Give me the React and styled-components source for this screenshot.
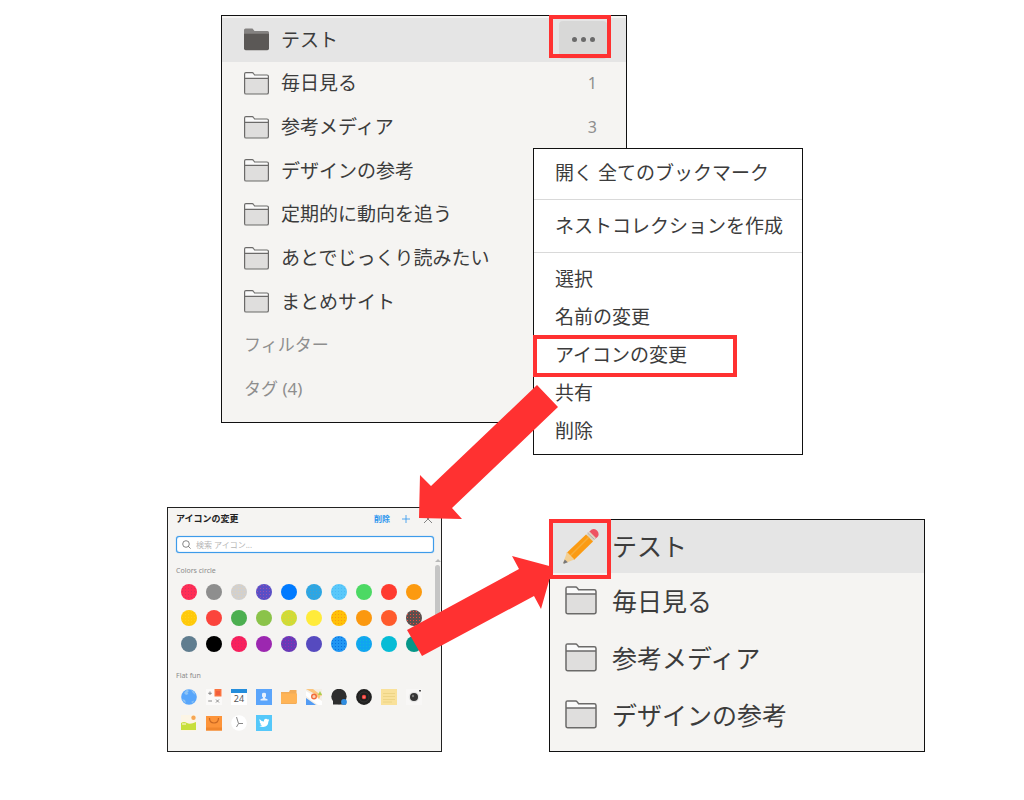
import React from "react";
import styled, { createGlobalStyle, css } from "styled-components";

const colors = {
  red: "#ff3131",
  panel: "#f5f4f2",
  active: "#e5e5e5",
  hover: "#d8d8d7",
  text: "#3c3c3c",
  sub: "#8e8e8e",
  line: "#d9d9d9",
  blue: "#2b94ee",
};

const collections = [
  { title: "毎日見る", count: 1 },
  { title: "参考メディア", count: 3 },
  { title: "デザインの参考" },
  { title: "定期的に動向を追う" },
  { title: "あとでじっくり読みたい" },
  { title: "まとめサイト" },
];

const menuSections = [
  ["開く 全てのブックマーク"],
  ["ネストコレクションを作成"],
  ["選択", "名前の変更", "アイコンの変更", "共有", "削除"],
];

const swatches = [
  ["#ff2d55", "#d9305f"],
  ["#8e8e8e"],
  ["#d1d0cf", "#e2d0b8"],
  ["#5a4fc6", "#9a54ae"],
  ["#007aff"],
  ["#2ca6e4", "#4fa0c4"],
  ["#5ac8fa", "#4bbaf5"],
  ["#4cd964"],
  ["#ff3b30"],
  ["#fc9a0f"],
  ["#ffc90a", "#ffd21c"],
  ["#fb443c"],
  ["#4caf50"],
  ["#8bc34a"],
  ["#cddc39", "#ecd02a"],
  ["#ffeb3b"],
  ["#ffc107", "#fb9a12"],
  ["#fb980f"],
  ["#ff5a2c"],
  ["#5c4f4d", "#f0483e"],
  ["#607d8f"],
  ["#000000"],
  ["#f8205c", "#de2468"],
  ["#9c27b0"],
  ["#673ab7", "#9c27b0"],
  ["#564abf"],
  ["#2196f3", "#0a70e0"],
  ["#10a5f0", "#10b9da"],
  ["#06bcd6"],
  ["#069688"],
];

function FolderIcon({ filled, large }) {
  return (
    <Svg viewBox="0 0 25 23" $w={large ? 32 : 25} $h={large ? 29 : 23} aria-hidden="true">
      {filled ? (
        <>
          <path d="M0 2Q0 .5 1.500 .5H8.500L10.500 3H23.500Q25 3 25 4.500V7H0Z" fill="#848281" />
          <path d="M0 5.800H25V20.500Q25 22.300 23.300 22.300H1.700Q0 22.300 0 20.500Z" fill="#5b5856" />
        </>
      ) : (
        <>
          <path d="M.6 2Q.6 .7 1.900 .7H8.200Q9 .7 9.500 1.500L10.600 3H23Q24.400 3 24.400 4.300V20.400Q24.400 22 22.900 22H2.100Q.6 22 .6 20.400Z" fill="#fafafa" />
          <path d="M.6 6.300H24.400V20.400Q24.400 22 22.900 22H2.100Q.6 22 .6 20.400Z" fill="#dfdedd" />
          <path
            d="M.6 2Q.6 .7 1.900 .7H8.200Q9 .7 9.500 1.500L10.600 3H23Q24.400 3 24.400 4.300V20.400Q24.400 22 22.900 22H2.100Q.6 22 .6 20.400ZM.6 6.300H24.400"
            fill="none"
            stroke="#6b6a69"
            strokeWidth="1.200"
          />
        </>
      )}
    </Svg>
  );
}

function PencilIcon() {
  return (
    <Svg viewBox="0 0 36 36" $w={36} $h={36} aria-hidden="true">
      <path d="M27 3Q30-.5 34 2.500Q37 6 34.500 9L32 11L25.500 4.500Z" fill="#ee5263" />
      <path d="M26.500 3.500L33 10L29.500 13.500L23 7Z" fill="#dfd3c0" />
      <path d="M24.500 5L31.500 11.500" stroke="#a9b0b4" strokeWidth="1" />
      <path d="M23 6.500L30 13.500L11 32L3.500 25Z" fill="#fb9b13" />
      <path d="M26 9L7 28" stroke="#f5ae3c" strokeWidth="1.500" />
      <path d="M4 24L11.500 31.500L1 35.500Q0 35.500 .5 34Z" fill="#f3cf92" />
      <path d="M1.800 31.500L4.800 34.200L1 35.700Q0 35.500 .3 34.500Z" fill="#77777b" />
    </Svg>
  );
}

const flatIcons = [
  {
    name: "Globe",
    art: (
      <>
        <circle cx="8" cy="8" r="7.800" fill="#58a6fb" />
        <path d="M6 .6L8 2L6.500 3.500L7.500 5L5 6L3 4Z M10 1L13 2.500L14.500 6L12 4Z M1 10L4 11L5 14L3 13Z M10 13L13 11.500L12 14Z" fill="#8ec4f5" />
      </>
    ),
  },
  {
    name: "Calculator",
    art: (
      <>
        <path d="M0 0H16V16H0Z" fill="#fbfaf9" />
        <path d="M8.500 0H15.500V7.500H8.500Z" fill="#fb7440" />
        <path d="M10 3H14M10 5H14" stroke="#e84b3a" />
        <path d="M4 2.500V6M2.200 4.300H5.800M2.200 12H6M10 10.500L13 13.500M13 10.500L10 13.500" stroke="#8b8b8b" fill="none" />
      </>
    ),
  },
  {
    name: "Calendar",
    art: (
      <>
        <path d="M0 0H16V16H0Z" fill="#fff" />
        <path d="M0 0H16V4H0Z" fill="#258edc" />
        <text x="8" y="13" textAnchor="middle" fontFamily="Noto Sans, sans-serif" fontSize="9" fill="#555">24</text>
      </>
    ),
  },
  {
    name: "Contact",
    art: (
      <>
        <path d="M0 0H16V16H0Z" fill="#5ba5fb" />
        <path d="M6 5Q6 3.800 8 3.800T10 5V7.500L9 8.500V9.300L11.500 10.300V11.500H4.500V10.300L7 9.300V8.500L6 7.500Z" fill="#e7f1fd" />
      </>
    ),
  },
  {
    name: "Folder",
    art: (
      <>
        <path d="M0 3H8L9 1H15.500V15H0Z" fill="#f2ac58" />
        <path d="M0 4.500H16V14H0Z" fill="#ffb456" />
      </>
    ),
  },
  {
    name: "Map",
    art: (
      <>
        <path d="M0 0H16V16H0Z" fill="#f3eee6" />
        <path d="M0 2L16 12V16H12L0 7Z" fill="#fff" />
        <path d="M0 0H7L16 7V4L13 10L9 5Z" fill="#fbc57c" />
        <path d="M0 9L10 16H0Z" fill="#539cf4" />
        <path d="M14 2L16 6H12Z" fill="#aace51" />
        <circle cx="8" cy="7.500" r="2.300" fill="#f7d5b8" stroke="#f36c3c" strokeWidth="1.400" />
      </>
    ),
  },
  {
    name: "Chat",
    art: (
      <>
        <circle cx="8" cy="7.500" r="7.700" fill="#2e2e2e" />
        <path d="M2 11H15V15.500H2Z" fill="#2e2e2e" />
        <circle cx="13" cy="13" r="2.900" fill="#308de0" />
      </>
    ),
  },
  {
    name: "Record",
    art: (
      <>
        <circle cx="8" cy="8" r="7.900" fill="#202020" />
        <circle cx="8" cy="8" r="5" fill="none" stroke="#373737" strokeWidth=".8" />
        <circle cx="8" cy="8" r="2.200" fill="#f2423d" />
        <circle cx="8" cy="8" r=".6" fill="#fff" />
      </>
    ),
  },
  {
    name: "Note",
    art: (
      <>
        <path d="M0 0H16V16H0Z" fill="#f9e19a" />
        <path d="M2 4.500H14M2 7.500H14M2 10.500H14M2 13H11" stroke="#ead080" strokeWidth=".8" />
      </>
    ),
  },
  {
    name: "Camera",
    art: (
      <>
        <path d="M0 0H16V16H0Z" fill="#f8f7f6" />
        <circle cx="8" cy="8" r="5.300" fill="#e5e5e4" />
        <circle cx="8" cy="8" r="4" fill="#353535" />
        <circle cx="7" cy="7" r="1.200" fill="#777" />
        <path d="M13 1H15V2.500H13Z" fill="#4e4e4e" />
      </>
    ),
  },
  {
    name: "Photo",
    art: (
      <>
        <path d="M0 0H15V16H0Z" fill="#fcf5e5" />
        <circle cx="12.500" cy="2.800" r="2.200" fill="#f6a654" />
        <path d="M0 8Q3 6 6 8T15 7V15H0Z" fill="#c7df3c" />
        <path d="M1 8H5V10H1Z" fill="#e6ec91" />
      </>
    ),
  },
  {
    name: "Bag",
    art: (
      <>
        <path d="M0 1H16V15.500H0Z" fill="#fd943a" />
        <path d="M0 12.500H16V15.500H0Z" fill="#f1862d" />
        <path d="M3.500 3Q3.500 8 8 8T12.500 3" stroke="#c96823" fill="none" strokeWidth="1.200" />
      </>
    ),
  },
  {
    name: "Clock",
    art: (
      <>
        <circle cx="8" cy="8" r="7.800" fill="#fff" />
        <path d="M5.500 2L7.500 8.500H12M7.500 8.500L5.500 12" stroke="#888" fill="none" />
      </>
    ),
  },
  {
    name: "Bird",
    art: (
      <>
        <path d="M0 0H16V16H0Z" fill="#55c8fa" />
        <path d="M3.500 4Q5.500 6.500 8 6.500Q7.700 3.800 10 3.700Q11 3.700 11.700 4.500L13 4L12.400 5.300L13.300 5.200L12.400 6.400Q12.200 11.500 7.200 12Q5 12 3.200 11Q5 11.200 6 10.300Q4.500 10 4.200 8.800H5Q3.600 8 3.600 6.500L4.300 6.700Q3 5.600 3.500 4Z" fill="#fff" />
      </>
    ),
  },
];

function Sidebar() {
  return (
    <SidebarPanel>
      <SidebarList>
        <Row $active>
          <RowLink href="#test">
            <FolderIcon filled />
            テスト
          </RowLink>
          <MoreButton type="button" aria-label="メニュー">
            <Dot />
            <Dot />
            <Dot />
          </MoreButton>
        </Row>
        {collections.map((item) => (
          <Row key={item.title}>
            <RowLink href="#collection">
              <FolderIcon />
              {item.title}
            </RowLink>
            {item.count && <Count>{item.count}</Count>}
          </Row>
        ))}
        <Row>
          <SectionLink href="#filter">フィルター</SectionLink>
        </Row>
        <Row>
          <SectionLink href="#tags">タグ (4)</SectionLink>
        </Row>
      </SidebarList>
      <ContextMenu />
    </SidebarPanel>
  );
}

function ContextMenu() {
  return (
    <Menu>
      {menuSections.map((items) => (
        <MenuSection key={items[0]}>
          {items.map((item) => (
            <MenuItem key={item} type="button" $marked={item === "アイコンの変更"}>
              {item}
            </MenuItem>
          ))}
        </MenuSection>
      ))}
    </Menu>
  );
}

function IconPicker() {
  return (
    <PickerPanel>
      <PickerHeader>
        <PickerTitle>アイコンの変更</PickerTitle>
        <PickerAction type="button">削除</PickerAction>
        <PickerIconAction type="button" aria-label="追加">
          <Svg viewBox="0 0 8 8" $w={8} $h={8} aria-hidden="true">
            <path d="M4 0V8M0 4H8" stroke={colors.blue} strokeWidth=".8" />
          </Svg>
        </PickerIconAction>
        <PickerIconAction type="button" aria-label="閉じる">
          <Svg viewBox="0 0 8 8" $w={8} $h={8} aria-hidden="true">
            <path d="M0 0L8 8M8 0L0 8" stroke="#666" strokeWidth=".8" />
          </Svg>
        </PickerIconAction>
      </PickerHeader>
      <Search>
        <Svg viewBox="0 0 9 9" $w={9} $h={9} aria-hidden="true">
          <circle cx="4" cy="4" r="3.300" fill="none" stroke="#666" strokeWidth=".8" />
          <path d="M6.300 6.300L8.600 8.600" stroke="#666" strokeWidth=".8" />
        </Svg>
        <SearchInput type="text" placeholder="検索 アイコン..." aria-label="検索 アイコン" />
      </Search>
      <PickerBody>
        <PickerGroups>
          <GroupTitle>Colors circle</GroupTitle>
          <IconGrid>
            {swatches.map(([color, dots]) => (
              <IconButton key={color} type="button" aria-label={color}>
                <Swatch $color={color} $dots={dots} />
              </IconButton>
            ))}
          </IconGrid>
          <GroupTitle>Flat fun</GroupTitle>
          <IconGrid>
            {flatIcons.map((icon) => (
              <IconButton key={icon.name} type="button" aria-label={icon.name}>
                <Svg viewBox="0 0 16 16" $w={16} $h={16} aria-hidden="true">
                  {icon.art}
                </Svg>
              </IconButton>
            ))}
          </IconGrid>
        </PickerGroups>
        <ScrollTrack>
          <ScrollArrow />
          <ScrollThumb />
        </ScrollTrack>
      </PickerBody>
    </PickerPanel>
  );
}

function ResultList() {
  return (
    <ResultPanel>
      <ResultRow $active>
        <ResultLink href="#test">
          <PencilFrame>
            <PencilIcon />
          </PencilFrame>
          テスト
        </ResultLink>
      </ResultRow>
      {collections.slice(0, 3).map((item) => (
        <ResultRow key={item.title}>
          <ResultLink href="#collection">
            <FolderIcon large />
            {item.title}
          </ResultLink>
        </ResultRow>
      ))}
    </ResultPanel>
  );
}

export default function App() {
  return (
    <>
      <GlobalStyle />
      <Board>
        <Sidebar />
        <BottomRow>
          <IconPicker />
          <ResultList />
        </BottomRow>
        <Arrows viewBox="0 0 1024 800" preserveAspectRatio="none" aria-hidden="true">
          <polygon points="537,385 558,407 452,508 462,519 419,518 420,475 431,486" />
          <polygon points="407,630 422,656 534,596 541,609 553,567 512,556 519,569" />
        </Arrows>
      </Board>
    </>
  );
}

const GlobalStyle = createGlobalStyle`
  * {
    box-sizing: border-box;
  }

  body {
    margin: 0;
    background: #fff;
    color: ${colors.text};
    font-family: "Noto Sans", "Noto Sans CJK JP", sans-serif;
  }

  button {
    padding: 0;
    border: 0;
    background: none;
    color: inherit;
    font-family: inherit;
  }

  a {
    color: inherit;
    text-decoration: none;
  }

  ul {
    margin: 0;
    padding: 0;
    list-style: none;
  }
`;

const Board = styled.main`
  position: relative;
  max-width: 1024px;
  margin: 0 auto;
  padding: 15px 99px 48px 167px;
`;

const Svg = styled.svg`
  display: block;
  flex: none;
  width: ${(props) => props.$w}px;
  height: ${(props) => props.$h}px;
`;

const marker = css`
  content: "";
  position: absolute;
  border: 4px solid ${colors.red};
  pointer-events: none;
`;

const SidebarPanel = styled.nav`
  position: relative;
  width: 54%;
  max-width: 406px;
  margin-left: 54px;
  padding: 2px 0 11px;
  border: 1px solid #111;
  background: ${colors.panel};
`;

const SidebarList = styled.ul`
  display: grid;
  grid-auto-rows: 1fr;
  min-height: 393px;
`;

const Row = styled.li`
  display: flex;
  align-items: center;
  padding: 0 29px 0 22px;
  background: ${(props) => (props.$active ? colors.active : "none")};
`;

const RowLink = styled.a`
  display: flex;
  flex: 1;
  align-items: center;
  gap: 12px;
  font-size: 19px;
  line-height: 28px;
`;

const SectionLink = styled.a`
  color: ${colors.sub};
  font-size: 17px;
  line-height: 28px;
`;

const Count = styled.span`
  color: ${colors.sub};
  font-size: 16px;
  line-height: 28px;
`;

const MoreButton = styled.button`
  position: relative;
  display: flex;
  align-items: center;
  justify-content: center;
  gap: 4px;
  width: 48px;
  height: 38px;
  margin-right: -10px;
  border-radius: 4px;
  background: ${colors.hover};

  &:after {
    ${marker}
    inset: -6px -4px 1px -10px;
  }
`;

const Dot = styled.span`
  width: 5px;
  height: 5px;
  border-radius: 50%;
  background: #6a6a6a;
`;

const Menu = styled.div`
  position: absolute;
  top: 132px;
  left: calc(100% - 93px);
  z-index: 1;
  width: max-content;
  border: 1px solid #111;
  background: #fff;
`;

const MenuSection = styled.div`
  padding: 7px 0;

  & + & {
    border-top: 1px solid ${colors.line};
  }

  &:first-child {
    padding-top: 5px;
  }

  &:last-child {
    padding-bottom: 4px;
  }
`;

const MenuItem = styled.button`
  position: relative;
  display: block;
  width: 100%;
  height: 38px;
  padding: 0 19px 0 21px;
  font-size: 19px;
  line-height: 28px;
  text-align: left;

  ${(props) =>
    props.$marked &&
    css`
      &:after {
        ${marker}
        inset: -1px 65px -3px -1px;
      }
    `}
`;

const BottomRow = styled.div`
  display: grid;
  grid-template-columns: 275fr 376fr;
  align-items: end;
  gap: 107px;
  margin-top: 84px;
`;

const PickerPanel = styled.section`
  padding-bottom: 15px;
  border: 1px solid #222;
  background: ${colors.panel};
`;

const PickerHeader = styled.header`
  display: flex;
  align-items: center;
  gap: 10px;
  height: 22px;
  padding: 0 7px 0 8px;
`;

const PickerTitle = styled.h2`
  flex: 1;
  margin: 0;
  color: #222;
  font-size: 9px;
  line-height: 12px;
`;

const PickerAction = styled.button`
  color: ${colors.blue};
  font-size: 8px;
  font-weight: bold;
  line-height: 12px;
`;

const PickerIconAction = styled.button`
  display: flex;
  justify-content: center;
  width: 12px;
`;

const Search = styled.label`
  display: flex;
  align-items: center;
  gap: 5px;
  height: 17px;
  margin: 6px 7px 0 8px;
  padding: 0 5px;
  border: 1px solid #3d9bea;
  border-radius: 3px;
  box-shadow: 0 0 1px 0 #3d9bea, inset 0 0 1px 0 #3d9bea;
  background: #fff;
`;

const SearchInput = styled.input`
  flex: 1;
  min-width: 0;
  padding: 0;
  border: 0;
  outline: 0;
  background: none;
  font-family: inherit;
  font-size: 8px;
  line-height: 12px;

  &::placeholder {
    color: #b5b5b5;
  }
`;

const PickerBody = styled.div`
  display: flex;
  margin-top: 6px;
`;

const PickerGroups = styled.div`
  flex: 1;
  padding: 0 8px;
`;

const GroupTitle = styled.h3`
  margin: 0;
  padding-top: 6px;
  color: #8a8a8a;
  font-size: 7px;
  font-weight: normal;
  line-height: 12px;

  &:not(:first-child) {
    padding-top: 13px;
  }
`;

const IconGrid = styled.div`
  display: grid;
  grid-template-columns: repeat(10, 1fr);
  grid-auto-rows: 26px;
  padding-top: 2px;
`;

const IconButton = styled.button`
  display: flex;
  align-items: center;
  justify-content: center;
`;

const Swatch = styled.span`
  width: 16px;
  height: 16px;
  border-radius: 50%;
  background-color: ${(props) => props.$color};
  ${(props) =>
    props.$dots &&
    css`
      background-image: radial-gradient(${props.$dots} 20%, transparent 30%);
      background-size: 3px 3px;
    `}
`;

const ScrollTrack = styled.div`
  display: flex;
  flex-direction: column;
  align-items: center;
  gap: 3px;
  width: 7px;
`;

const ScrollArrow = styled.span`
  border: 3px solid transparent;
  border-top-width: 0;
  border-bottom-color: #b9b9b9;
`;

const ScrollThumb = styled.span`
  width: 5px;
  height: 60px;
  border-radius: 3px;
  background: #c5c5c5;
`;

const ResultPanel = styled.ul`
  && {
    padding-bottom: 7px;
  }
  border: 1px solid #111;
  background: ${colors.panel};
`;

const ResultRow = styled.li`
  height: ${(props) => (props.$active ? 53 : 57)}px;
  background: ${(props) => (props.$active ? colors.active : "none")};
`;

const ResultLink = styled.a`
  display: flex;
  align-items: center;
  gap: 15px;
  height: 100%;
  padding: 0 0 2px 15px;
  font-size: 25px;
  line-height: 36px;
`;

const PencilFrame = styled.span`
  position: relative;
  display: flex;
  justify-content: center;
  width: 32px;

  &:after {
    ${marker}
    inset: -9px -14px -15px -16px;
  }
`;

const Arrows = styled.svg`
  position: absolute;
  inset: 0;
  z-index: 2;
  width: 100%;
  height: 100%;
  fill: ${colors.red};
  pointer-events: none;
`;
